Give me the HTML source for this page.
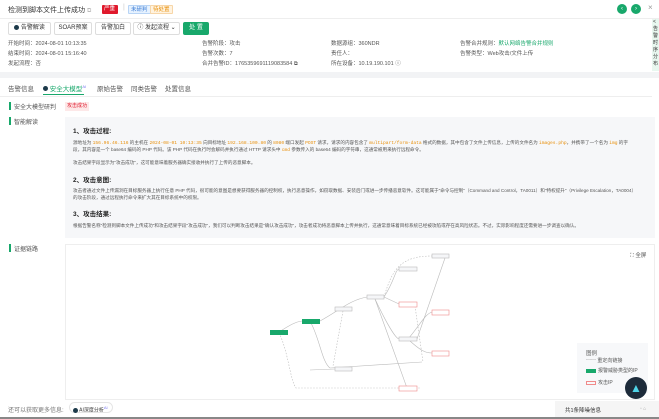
<!DOCTYPE html>
<html><head><meta charset="utf-8"><style>
*{margin:0;padding:0;box-sizing:border-box}
body{width:659px;height:419px;overflow:hidden;background:#fff;font-family:"Liberation Sans","Noto Sans CJK SC",sans-serif;color:#333;position:relative}
.a{position:absolute;white-space:nowrap}
.s6{font-size:5.5px;color:#555}
.btn{position:absolute;top:22px;height:13px;border:1px solid #ddd;border-radius:2px;font-size:6px;line-height:11px;text-align:center;color:#333;background:#fff}
.tag{position:absolute;top:5px;height:9px;font-size:5.5px;line-height:9px;padding:0 2px;border-radius:1px}
.p{font-size:4.6px;color:#555;position:absolute;left:73px;white-space:nowrap}
.h{font-size:6.5px;font-weight:bold;color:#222;position:absolute;left:73px}
.o{color:#e8900c;font-family:"Liberation Mono",monospace}
.bar{position:absolute;left:9px;width:2px;height:8px;background:#18a86b}
</style></head><body>
<div class="a" style="left:8px;top:5px;font-size:7px;color:#333">检测到脚本文件上传成功 <span style="color:#bbb;font-size:6px">⧉</span></div>
<div class="tag" style="left:102px;background:#e0192c;color:#fff;width:16px">严重</div>
<div class="a" style="left:123px;top:4px;color:#ccc;font-size:7px">|</div>
<div class="tag" style="left:128px;background:#e6f2ff;color:#3a7bd5;border:1px solid #b8d4f5">未研判</div>
<div class="tag" style="left:150px;background:#fff3e0;color:#e8900c;border:1px solid #f7d6a8">待处置</div>
<div class="a" style="left:617px;top:4px;width:10px;height:10px;border-radius:50%;background:#18a86b;color:#fff;font-size:6px;text-align:center;line-height:10px">‹</div>
<div class="a" style="left:631px;top:4px;width:10px;height:10px;border-radius:50%;background:#18a86b;color:#fff;font-size:6px;text-align:center;line-height:10px">›</div>
<div class="a" style="left:648px;top:3px;font-size:8px;color:#999">×</div>
<div class="a" style="left:0;top:18px;width:659px;height:1px;background:#eee"></div>
<div class="a" style="left:652px;top:19px;width:7px;height:52px;background:#e8f7ef;font-size:5px;line-height:7px;color:#333;white-space:normal;padding-left:1px">&lt;<br>告<br>警<br>时<br>序<br>分<br>布</div>
<div class="btn" style="left:8px;width:43px"><span style="display:inline-block;width:5px;height:5px;border-radius:50%;background:#1d3a4a;vertical-align:middle"></span> 告警解读</div>
<div class="btn" style="left:54px;width:38px">SOAR预案</div>
<div class="btn" style="left:95px;width:36px">告警加白</div>
<div class="btn" style="left:133px;width:47px">ⓘ 发起流程 ⌄</div>
<div class="btn" style="left:183px;width:26px;background:#18a86b;border-color:#18a86b;color:#fff">处 置</div>
<div class="a s6" style="left:8px;top:39px">开始时间：2024-08-01 10:13:35</div>
<div class="a s6" style="left:8px;top:49px">结束时间：2024-08-01 15:16:40</div>
<div class="a s6" style="left:8px;top:59px">发起流程：否</div>
<div class="a s6" style="left:202px;top:39px">告警阶段：攻击</div>
<div class="a s6" style="left:202px;top:49px">告警次数：7</div>
<div class="a s6" style="left:202px;top:59px">合并告警ID：1765359691119083584 ⧉</div>
<div class="a s6" style="left:331px;top:39px">数据源组：360NDR</div>
<div class="a s6" style="left:331px;top:49px">责任人：</div>
<div class="a s6" style="left:331px;top:59px">所在设备：10.19.190.101 ⓘ</div>
<div class="a s6" style="left:460px;top:39px">告警合并规则：<span style="color:#18a86b">默认网络告警合并规则</span></div>
<div class="a s6" style="left:460px;top:49px">告警类型：Web攻击/文件上传</div>
<div class="a" style="left:0;top:72px;width:659px;height:6px;background:#f2f3f5"></div>
<div class="a" style="left:8px;top:83px;font-size:6.5px;color:#555">告警信息</div>
<div class="a" style="left:43px;top:83px;font-size:6.5px;color:#18a86b"><span style="display:inline-block;width:5px;height:5px;border-radius:50%;background:#1d3a4a"></span> 安全大模型<sup style="font-size:4px;color:#7a7af0">AI</sup></div>
<div class="a" style="left:43px;top:94px;width:41px;height:1px;background:#18a86b"></div>
<div class="a" style="left:97px;top:83px;font-size:6.5px;color:#555">原始告警</div>
<div class="a" style="left:131px;top:83px;font-size:6.5px;color:#555">同类告警</div>
<div class="a" style="left:165px;top:83px;font-size:6.5px;color:#555">处置信息</div>
<div class="a" style="left:0;top:96px;width:652px;height:1px;background:#eee"></div>
<div class="bar" style="top:102px"></div><div class="a" style="left:14px;top:102px;font-size:6px;color:#555">安全大模型研判</div>
<div class="bar" style="top:117px"></div><div class="a" style="left:14px;top:117px;font-size:6px;color:#555">智能解读</div>
<div class="a" style="left:65px;top:102px;height:9px;padding:0 2px;background:#fde8e8;color:#e0192c;font-size:5px;line-height:9px">攻击成功</div>
<div class="a" style="left:65px;top:117px;width:590px;height:121px;background:#f6f7f9"></div>
<div class="h" style="top:125px">1、攻击过程:</div>
<div class="p" style="top:140px">源地址为 <span class="o">156.96.46.116</span> 的主机在 <span class="o">2024-08-01 10:13:35</span> 向目标地址 <span class="o">192.168.100.80</span> 的 <span class="o">8080</span> 端口发起 <span class="o">POST</span> 请求，请求的内容包含了 <span class="o">multipart/form-data</span> 格式的数据，其中包含了文件上传信息，上传的文件名为 <span class="o">images.php</span>，并携带了一个名为 <span class="o">img</span> 的字</div>
<div class="p" style="top:147px">段，其内容是一个 base64 编码的 PHP 代码。该 PHP 代码在执行时会解码并执行通过 HTTP 请求头中 <span class="o">cmd</span> 参数传入的 base64 编码的字符串，这通常被用来执行远程命令。</div>
<div class="p" style="top:160px">攻击结果字段显示为"攻击成功"，这可能意味着服务器确实接收并执行了上传的恶意脚本。</div>
<div class="h" style="top:174px">2、攻击意图:</div>
<div class="p" style="top:188px">攻击者通过文件上传漏洞在目标服务器上执行任意 PHP 代码，很可能的意图是想要获得服务器的控制权，执行恶意操作，如窃取数据、安装后门或进一步传播恶意软件。这可能属于"命令与控制"（Command and Control，TA0011）和"特权提升"（Privilege Escalation，TA0004）</div>
<div class="p" style="top:195px">的攻击阶段，通过远程执行命令来扩大其在目标系统中的权限。</div>
<div class="h" style="top:208px">3、攻击结果:</div>
<div class="p" style="top:223px">根据告警名称"检测到脚本文件上传成功"和攻击结果字段"攻击成功"，我们可以判断攻击结果是"确认攻击成功"，攻击者成功将恶意脚本上传并执行，这通常意味着目标系统已经被攻陷或存在高风险状态。不过，实际影响程度还需要进一步调查以确认。</div>
<div class="bar" style="top:244px"></div><div class="a" style="left:14px;top:244px;font-size:6px;color:#555">证据链路</div>
<div class="a" style="left:65px;top:244px;width:590px;height:156px;border:1px solid #eee"></div>
<div class="a" style="left:630px;top:251px;font-size:5.5px;color:#555">⛶ 全屏</div>
<svg class="a" style="left:0;top:0" width="659" height="419">
<g fill="none" stroke="#bbb" stroke-width="0.6">
<path d="M279,332 C290,325 295,322 302,321"/>
<path d="M279,333 C288,350 290,380 296,388 L420,388" stroke-dasharray="1.5,1.5"/>
<path d="M320,321 C340,310 350,300 367,297"/>
<path d="M311,323 C320,340 322,362 330,368 L422,362" />
<path d="M384,297 C395,280 395,270 399,269"/>
<path d="M384,297 C392,270 400,256 432,256" stroke-dasharray="1.5,1.5"/>
<path d="M384,297 L399,304"/>
<path d="M375,299 C385,320 395,338 399,339"/>
<path d="M375,299 L407,388"/>
<path d="M417,339 L445,258"/>
<path d="M408,339 C420,325 425,314 432,312"/>
<path d="M410,341 C420,350 425,353 432,353"/>
<path d="M310,370 L335,369"/>
<path d="M343,311 L333,366" stroke-dasharray="1.5,1.5"/>
<path d="M415,306 L423,362" stroke-dasharray="1.5,1.5"/>
</g>
<g stroke-width="0.6">
<rect x="270" y="330" width="18" height="5" fill="#18a86b"/>
<rect x="302" y="319" width="18" height="5" fill="#18a86b"/>
<rect x="432" y="254" width="17" height="4" fill="#f5f6f8" stroke="#bbb"/>
<rect x="399" y="267" width="18" height="4" fill="#f5f6f8" stroke="#bbb"/>
<rect x="367" y="295" width="17" height="4" fill="#f5f6f8" stroke="#bbb"/>
<rect x="399" y="302" width="18" height="5" fill="#fff" stroke="#f08a8a"/>
<rect x="432" y="310" width="17" height="5" fill="#fff" stroke="#f08a8a"/>
<rect x="335" y="307" width="17" height="4" fill="#f5f6f8" stroke="#bbb"/>
<rect x="399" y="337" width="18" height="4" fill="#f5f6f8" stroke="#bbb"/>
<rect x="432" y="351" width="17" height="5" fill="#fff" stroke="#f08a8a"/>
<rect x="335" y="367" width="17" height="4" fill="#f5f6f8" stroke="#bbb"/>
<rect x="399" y="386" width="18" height="5" fill="#fff" stroke="#f08a8a"/>
</g>
</svg>
<div class="a" style="left:577px;top:343px;width:71px;height:50px;background:#f7f8fa"></div>
<div class="a" style="left:586px;top:349px;font-size:5.5px;color:#555">图例</div>
<div class="a" style="left:586px;top:357px;font-size:5px;color:#555">┈┈ 重定向链接</div>
<div class="a" style="left:586px;top:369px;width:10px;height:4px;background:#18a86b"></div><div class="a" style="left:598px;top:367px;font-size:5px;color:#555">报警威胁类型的IP</div>
<div class="a" style="left:586px;top:381px;width:10px;height:4px;border:1px solid #f08a8a"></div><div class="a" style="left:598px;top:379px;font-size:5px;color:#555">攻击IP</div>
<div class="a" style="left:625px;top:377px;width:22px;height:22px;border-radius:50%;background:#1d2b3a;color:#4fd4e8;font-size:12px;text-align:center;line-height:22px;font-weight:bold">▲</div>
<div class="a" style="left:555px;top:401px;width:104px;height:16px;background:#f5f5f5"></div>
<div class="a" style="left:565px;top:406px;font-size:5.5px;color:#333">共1条降噪信息</div>
<div class="a" style="left:640px;top:406px;font-size:5px;color:#aaa">▫ ⌂</div>
<div class="a" style="left:8px;top:405px;font-size:6px;color:#777">还可以获取更多信息:</div>
<div class="a" style="left:69px;top:402px;width:44px;height:11px;border:1px solid #e5e5e5;border-radius:6px;font-size:5px;line-height:9px;padding-left:3px;color:#333"><span style="display:inline-block;width:5px;height:5px;border-radius:50%;background:#1d3a4a;vertical-align:middle"></span> AI深度分析<sup style="color:#7a7af0;font-size:4px">AI</sup></div>
<div class="a" style="left:0;top:417px;width:659px;height:2px;background:#888"></div>
</body></html>
